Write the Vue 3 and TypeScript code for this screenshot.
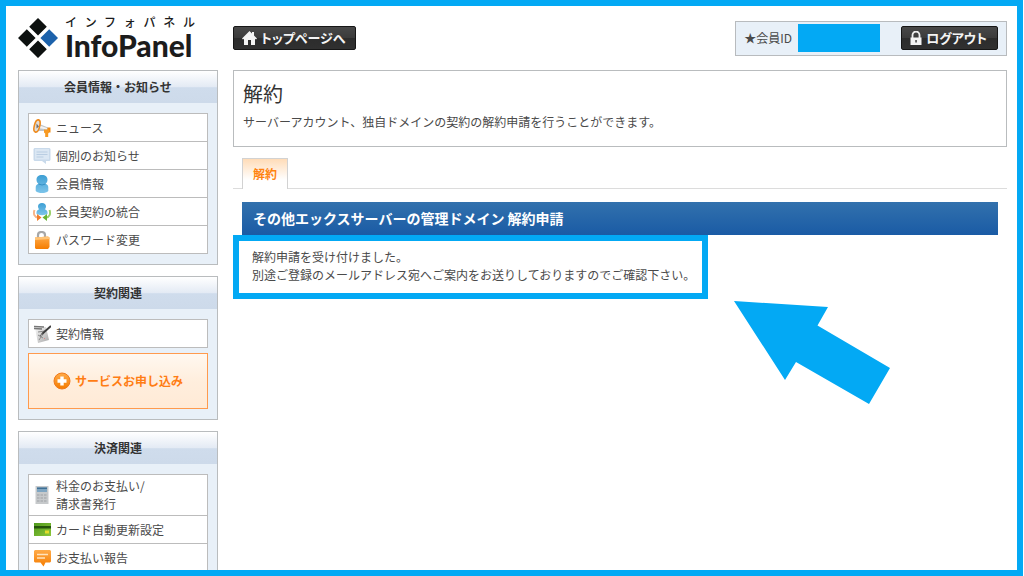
<script setup lang="ts">
interface NavItem {
  icon: string
  lines: string[]
}

interface NavPanel {
  title: string
  items: NavItem[]
  apply?: string
}

const panels: NavPanel[] = [
  {
    title: '会員情報・お知らせ',
    items: [
      { icon: 'horn', lines: ['ニュース'] },
      { icon: 'note', lines: ['個別のお知らせ'] },
      { icon: 'user', lines: ['会員情報'] },
      { icon: 'merge', lines: ['会員契約の統合'] },
      { icon: 'lock', lines: ['パスワード変更'] },
    ],
  },
  {
    title: '契約関連',
    items: [{ icon: 'contract', lines: ['契約情報'] }],
    apply: 'サービスお申し込み',
  },
  {
    title: '決済関連',
    items: [
      { icon: 'calc', lines: ['料金のお支払い/', '請求書発行'] },
      { icon: 'card', lines: ['カード自動更新設定'] },
      { icon: 'report', lines: ['お支払い報告'] },
    ],
  },
]
</script>

<template>
  <div class="frame">
    <svg class="defs" aria-hidden="true">
      <defs>
        <linearGradient id="gOrange" x1="0" y1="0" x2="0" y2="1">
          <stop offset="0" stop-color="#ffab4a" />
          <stop offset="1" stop-color="#f57c00" />
        </linearGradient>
        <linearGradient id="gBlue" x1="0" y1="0" x2="0" y2="1">
          <stop offset="0" stop-color="#3d9fd4" />
          <stop offset="1" stop-color="#7cc4ea" />
        </linearGradient>
        <linearGradient id="gGreen" x1="0" y1="0" x2="1" y2="1">
          <stop offset="0" stop-color="#4f9a1c" />
          <stop offset="1" stop-color="#8cc63a" />
        </linearGradient>
        <linearGradient id="gGrey" x1="0" y1="0" x2="1" y2="1">
          <stop offset="0" stop-color="#fafafa" />
          <stop offset="1" stop-color="#a8a8a8" />
        </linearGradient>
      </defs>
    </svg>

    <header class="top">
      <a class="logo" href="#" aria-label="InfoPanel">
        <svg class="mark" viewBox="0 0 40 40" aria-hidden="true">
          <path d="M20 0l8.800 8.800L20 17.600l-8.800-8.800zM8.800 11.200l8.800 8.800-8.800 8.800L0 20zM20 22.400l8.800 8.800L20 40l-8.800-8.800z" fill="#0d1110" />
          <path d="M31.200 11.200L40 20l-8.800 8.800-8.800-8.800z" fill="#1c62ab" />
        </svg>
        <span class="words">
          <span class="kana">インフォパネル</span>
          <span class="name">InfoPanel</span>
        </span>
      </a>
      <div class="bar">
        <button class="dark" type="button">
          <svg width="15" height="14" viewBox="0 0 15 14" aria-hidden="true">
            <path d="M7.500 0L0 7.500l1 1 1-.8V14h4V9h3v5h4V7.700l1 .8 1-1-3-3V1h-2v1.500z" fill="#f4f4f4" />
          </svg>
          トップページへ
        </button>
        <div class="member">
          <span>★会員ID</span>
          <span class="mask"></span>
          <button class="dark" type="button">
            <svg width="12" height="14" viewBox="0 0 12 14" aria-hidden="true">
              <path d="M2.500 7V4a3.500 3.500 0 0 1 7 0v3" fill="none" stroke="#eee" stroke-width="1.800" />
              <path d="M.5 6.500h11V14H.5z" fill="#f4f4f4" />
              <path d="M5.300 9h1.500v2.500H5.300z" fill="#444" />
            </svg>
            ログアウト
          </button>
        </div>
      </div>
    </header>

    <div class="body">
      <nav class="side">
        <section v-for="panel in panels" :key="panel.title" class="panel">
          <h2>{{ panel.title }}</h2>
          <div class="inner">
            <ul>
              <li v-for="item in panel.items" :key="item.icon">
                <a href="#">
                  <svg class="icon" viewBox="0 0 18 18" aria-hidden="true">
                    <g v-if="item.icon === 'horn'">
                      <path d="M4 4l11 4.500v3.500L4 12z" fill="#bfc4c8" />
                      <path d="M5 6l9 3v1.500L5 9z" fill="#f3f3f3" />
                      <path d="M14.500 8.500h3v5h-3z" fill="#f28a10" />
                      <path d="M11 10.500h5v3l-.8 1V18h-3v-3.500L11 13.500z" fill="#f79a22" />
                      <ellipse cx="4" cy="7" rx="2.700" ry="6.300" transform="rotate(14 4 7)" fill="#e2ddd6" stroke="#ee8a1c" stroke-width="1.600" />
                      <path d="M3.500 4.500L6 7.500 3.500 9.500z" fill="#6f6f6f" />
                    </g>
                    <g v-else-if="item.icon === 'note'">
                      <path d="M1.500 1h15l1 1v11l-1 1H13v3l-4-3H1.500l-1-1V2z" fill="#c9daeb" />
                      <path d="M2 2h14v10.500H2z" fill="#dbe7f3" />
                      <path d="M3.500 5h11M3.500 7.500h11M3.500 10h7" stroke="#b9cde2" />
                    </g>
                    <g v-else-if="item.icon === 'user'">
                      <path d="M9 0c3.500 0 5.500 2 5.500 4.800 0 2-.8 3.200-2 4 1.500.6 2.800 1.700 2.800 3.700V16c-1.500 1.500-3.500 2-6.300 2s-4.800-.5-6.300-2v-3.500c0-2 1.300-3.100 2.800-3.700-1.200-.8-2-2-2-4C3.500 2 5.500 0 9 0z" fill="url(#gBlue)" />
                      <path d="M5.500 9q3.500 2 7 0" fill="none" stroke="#3590c6" />
                    </g>
                    <g v-else-if="item.icon === 'merge'">
                      <path d="M9 0c2.500 0 4 1.500 4 3.500 0 1.300-.5 2-1.200 2.700 1.500.5 2.700 1.500 2.700 3V11c-2 1.500-9 1.500-11 0V9.200c0-1.500 1.200-2.500 2.700-3C5.500 5.500 5 4.800 5 3.500 5 1.500 6.500 0 9 0z" fill="url(#gBlue)" />
                      <path d="M1.500 7C0 11 1.500 14 5 14.500" fill="none" stroke="#f6b58a" stroke-width="2" />
                      <path d="M4 11l4.500 3.500L4 18z" fill="#f27d2b" />
                      <path d="M16.500 7c1.500 4 0 7-3.500 7.500" fill="none" stroke="#9bd06c" stroke-width="2" />
                      <path d="M14 11l-4.500 3.500L14 18z" fill="#67b432" />
                    </g>
                    <g v-else-if="item.icon === 'lock'">
                      <path d="M5 8V4Q5 1 8.500 1T12 4v4" fill="none" stroke="#a7a7a7" stroke-width="2.200" />
                      <path d="M2 6.500l13-1 1.500 1v9.500L15 18H3l-1-1z" fill="url(#gOrange)" />
                      <path d="M2 6.500l13-1 1.500 1V8L2 9z" fill="#ffc477" />
                    </g>
                    <g v-else-if="item.icon === 'contract'">
                      <path d="M2 3l11-1 3 13-11 3z" fill="url(#gGrey)" />
                      <path d="M1 1.500l10 .5M1 3.500l8 .5" stroke="#777" stroke-width="1.400" />
                      <path d="M5 7l7-1M5 10l5 3M10 9l-4 6" stroke="#8a8a8a" />
                      <path d="M18 1L9 9" stroke="#3d3d3d" stroke-width="2" />
                      <path d="M9.500 8L7 11" stroke="#666" />
                      <path d="M11 13l1 1" stroke="#d88" />
                    </g>
                    <g v-else-if="item.icon === 'calc'">
                      <path d="M2.500 0h13v18h-13z" fill="#c6c9cb" />
                      <path d="M4 1.500h10V6H4z" fill="#7fa6c2" />
                      <path d="M4 1.500h10V3H4z" fill="#3f6f94" />
                      <path d="M4 9h10M4 12h10M4 15h10" stroke="#b2b5b8" stroke-width="2" stroke-dasharray="2.500 1" />
                    </g>
                    <g v-else-if="item.icon === 'card'">
                      <path d="M1 2h17v13H1z" fill="url(#gGreen)" />
                      <path d="M1 5h17v2.500H1z" fill="#24520c" />
                      <path d="M12 9.500h4v3h-4z" fill="#e3dc2a" />
                    </g>
                    <g v-else>
                      <path d="M2 1h15l1 1v10.500l-1 1h-4.500l-2 4-3-4H2l-1-1V2z" fill="url(#gOrange)" />
                      <path d="M4 5.500h11M4 9h8" stroke="#ffe3bd" stroke-width="1.500" />
                    </g>
                  </svg>
                  <span class="label">
                    <span v-for="line in item.lines" :key="line">{{ line }}</span>
                  </span>
                </a>
              </li>
            </ul>
            <a v-if="panel.apply" class="apply" href="#">
              <svg width="18" height="18" viewBox="0 0 18 18" aria-hidden="true">
                <circle cx="9" cy="9" r="8" fill="url(#gOrange)" stroke="#f07a1c" />
                <path d="M7.300 4.500h3.400v2.800h2.800v3.400h-2.800v2.800H7.300v-2.800H4.500V7.300h2.800z" fill="#fff" />
              </svg>
              {{ panel.apply }}
            </a>
          </div>
        </section>
      </nav>

      <main class="main">
        <section class="intro">
          <h1>解約</h1>
          <p>サーバーアカウント、独自ドメインの契約の解約申請を行うことができます。</p>
        </section>
        <div class="tabs">
          <a class="tab" href="#">解約</a>
        </div>
        <h2 class="heading">その他エックスサーバーの管理ドメイン 解約申請</h2>
        <p class="message">
          解約申請を受け付けました。<br />
          別途ご登録のメールアドレス宛へご案内をお送りしておりますのでご確認下さい。
        </p>
        <svg class="arrow" viewBox="0 0 157 104" aria-hidden="true">
          <path d="M0 0L94 6 83.500 24.500 156 67 135 103 62 61 51 79z" fill="#03a9f4" />
        </svg>
      </main>
    </div>
  </div>
</template>

<style>
body {
  margin: 0;
  background: #fff;
}
</style>

<style scoped>
.frame {
  box-sizing: border-box;
  height: 100vh;
  margin-right: 1px;
  padding: 0 10px 0 12px;
  overflow: hidden;
  border: 6px solid #03a9f4;
  background: #fff;
  color: #4a4a4a;
  font: 12px/18px "Noto Sans CJK JP", sans-serif;
}
h1, h2, p, ul {
  margin: 0;
  padding: 0;
}
a {
  color: inherit;
  text-decoration: none;
}
.defs {
  position: absolute;
  width: 0;
  height: 0;
}
.top, .body {
  display: grid;
  grid-template-columns: 200px minmax(0, 1fr);
  column-gap: 15px;
}
.top {
  height: 64px;
  align-items: center;
}
.logo {
  display: flex;
  align-items: center;
  gap: 7px;
  color: #1c1c1c;
}
.mark {
  width: 40px;
  height: 40px;
}
.words {
  width: 130px;
}
.kana {
  display: block;
  font-size: 12px;
  font-weight: 500;
  line-height: 14px;
  text-align: justify;
  text-align-last: justify;
}
.name {
  display: block;
  font: 900 30px/32px Lato, sans-serif;
}
.bar {
  display: flex;
  justify-content: space-between;
  align-items: center;
}
.dark {
  display: flex;
  align-items: center;
  gap: 4px;
  height: 24px;
  padding: 0 10px 0 8px;
  border: 1px solid #161616;
  border-radius: 2px;
  background: linear-gradient(#484848, #3b3b3b 50%, #2c2c2c 51%, #303030);
  color: #f4f4f4;
  font: bold 13px/20px "Noto Sans CJK JP", sans-serif;
  font-feature-settings: "palt";
  white-space: nowrap;
}
.member {
  display: flex;
  align-items: center;
  box-sizing: border-box;
  height: 35px;
  padding: 0 8px;
  border: 1px solid #b8bbbe;
  background: #e8f0f8;
}
.mask {
  width: 82px;
  height: 28px;
  margin: 0 21px 0 6px;
  background: #03a9f4;
}
.side {
  display: flex;
  flex-direction: column;
  gap: 11px;
}
.panel {
  border: 1px solid #b9bcbe;
  background: #e8f0f8;
}
.panel h2 {
  background: linear-gradient(#fff, #e3eaf4 50%, #cfdcec 52%, #cddaea);
  color: #333;
  font-size: 12px;
  line-height: 32px;
  text-align: center;
}
.inner {
  padding: 10px 9px;
}
ul {
  border: 1px solid #bcbcbc;
  background: #fff;
  list-style: none;
}
li + li {
  border-top: 1px solid #bcbcbc;
}
li a {
  display: flex;
  align-items: center;
  gap: 5px;
  min-height: 27px;
  padding: 0 4px;
}
.icon {
  width: 18px;
  height: 18px;
}
.label {
  padding: 2px 0;
}
.label span {
  display: block;
}
.apply {
  display: flex;
  justify-content: center;
  align-items: center;
  gap: 4px;
  height: 54px;
  margin-top: 5px;
  border: 1px solid #ff9a4d;
  background: linear-gradient(#fff8f0, #ffeedd 50%, #ffead6);
  color: #ff7d14;
  font-weight: bold;
}
.main {
  position: relative;
}
.intro {
  padding: 10px 9px 15px;
  border: 1px solid #b9bcbe;
}
h1 {
  color: #333;
  font-size: 20px;
  font-weight: 400;
  line-height: 26px;
}
.intro p {
  padding-top: 6px;
}
.tabs {
  display: flex;
  margin-top: 11px;
  padding-left: 9px;
  border-bottom: 1px solid #dcdcdc;
}
.tab {
  margin-bottom: -1px;
  padding: 0 10px;
  border: 1px solid #d2d2d2;
  border-bottom: 0;
  background: linear-gradient(#ffdcb8, #fff 70%);
  color: #ff830f;
  font-weight: bold;
  line-height: 30px;
}
.heading {
  margin: 13px 9px 0;
  padding: 0 11px;
  background: linear-gradient(#3271ad, #1a5ba5);
  color: #fff;
  font-size: 14px;
  line-height: 33px;
}
.message {
  width: max-content;
  padding: 7px 7px 9px 13px;
  border: 6px solid #03a9f4;
}
.arrow {
  position: absolute;
  top: 231px;
  left: 501px;
  width: 157px;
  height: 104px;
}
</style>
